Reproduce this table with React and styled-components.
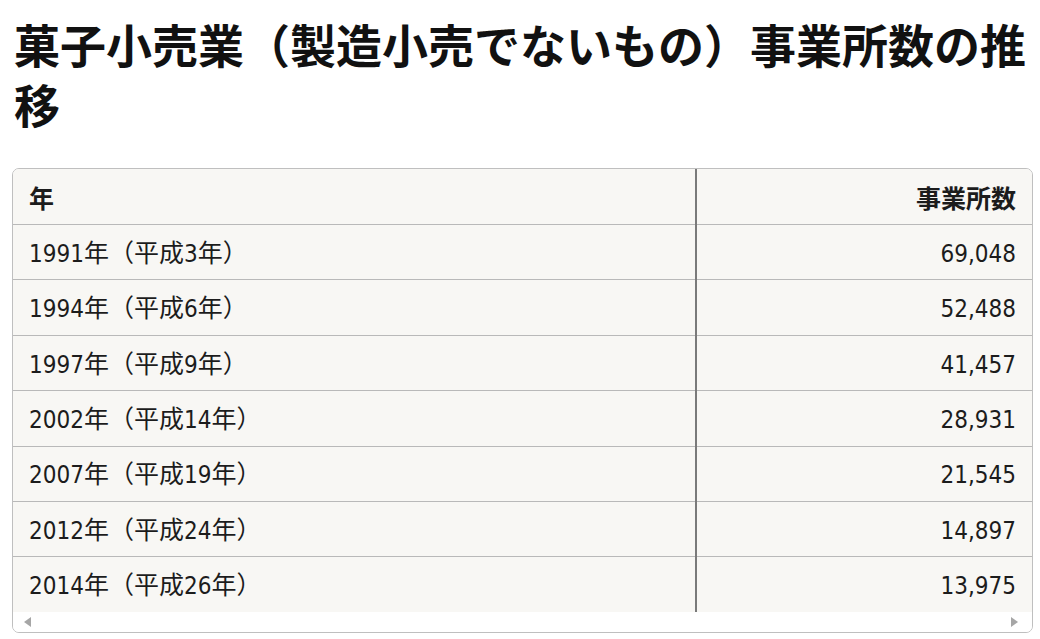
import React from 'react'
import styled, { createGlobalStyle } from 'styled-components'

const GlobalStyle = createGlobalStyle`
    body {
        margin: 0;
        background: #ffffff;
        color: #1a1a1a;
    }
`

const Page = styled.div`
    padding: 0 7px 0 12px;
`

const Title = styled.h1`
    margin: 18px 0 0 2px;
    font-family: "Liberation Serif", "Noto Sans CJK JP", serif;
    font-size: 46px;
    line-height: 60px;
    font-weight: 700;
    color: #111;
`

const Frame = styled.div`
    margin-top: 30px;
    border: 1px solid #bfbfbf;
    border-radius: 7px;
    overflow: hidden;
    background: #fff;
`

const Table = styled.table`
    width: 100%;
    border-collapse: collapse;
    font-family: "Noto Sans CJK JP", sans-serif;
    font-size: 25px;
    color: #1c1c1c;
    background: #f8f7f4;
`

const Cell = styled.td`
    height: ${p => (p.$head ? '55px' : '54.4px')};
    padding: 0 16px;
    text-align: ${p => (p.$num ? 'right' : 'left')};
    border-top: ${p => (p.$first ? 'none' : '1px solid #b9b9b9')};
    border-left: ${p => (p.$num ? '2px solid #7a7a7a' : 'none')};
    font-weight: ${p => (p.$head ? 700 : 400)};
    width: ${p => (p.$num ? '33%' : 'auto')};
    white-space: nowrap;
    line-height: 1.2;
`

const Digits = styled.span`
    font-family: "DejaVu Sans Condensed", "Liberation Sans Narrow", "Roboto", sans-serif;
    font-size: 24px;
`

const Track = styled.div`
    height: 20px;
    display: flex;
    align-items: center;
    justify-content: space-between;
    padding: 0 14px 0 11px;
    background: #fff;
`

const Arrow = styled.span`
    width: 0;
    height: 0;
    border-top: 5px solid transparent;
    border-bottom: 5px solid transparent;
    ${p => (p.$dir === 'left'
        ? 'border-right: 7px solid #a6a6a6;'
        : 'border-left: 7px solid #a6a6a6;')}
`

const rows = [
    ['1991年（平成3年）', '69,048'],
    ['1994年（平成6年）', '52,488'],
    ['1997年（平成9年）', '41,457'],
    ['2002年（平成14年）', '28,931'],
    ['2007年（平成19年）', '21,545'],
    ['2012年（平成24年）', '14,897'],
    ['2014年（平成26年）', '13,975'],
]

// digits use a narrower latin face than the kanji around them
const Mixed = ({ text }) =>
    text.split(/([\d,]+)/).map((part, i) =>
        /[\d,]/.test(part) ? <Digits key={i}>{part}</Digits> : part
    )

const App = () => {
    return (
        <Page>
            <GlobalStyle />
            <Title>菓子小売業（製造小売でないもの）事業所数の推移</Title>
            <Frame>
                <Table>
                    <thead>
                        <tr>
                            <Cell as="th" $head $first>年</Cell>
                            <Cell as="th" $head $first $num>事業所数</Cell>
                        </tr>
                    </thead>
                    <tbody>
                        {rows.map(([year, count]) => (
                            <tr key={year}>
                                <Cell><Mixed text={year} /></Cell>
                                <Cell $num><Mixed text={count} /></Cell>
                            </tr>
                        ))}
                    </tbody>
                </Table>
                <Track>
                    <Arrow $dir="left" />
                    <Arrow $dir="right" />
                </Track>
            </Frame>
        </Page>
    )
}

export default App
